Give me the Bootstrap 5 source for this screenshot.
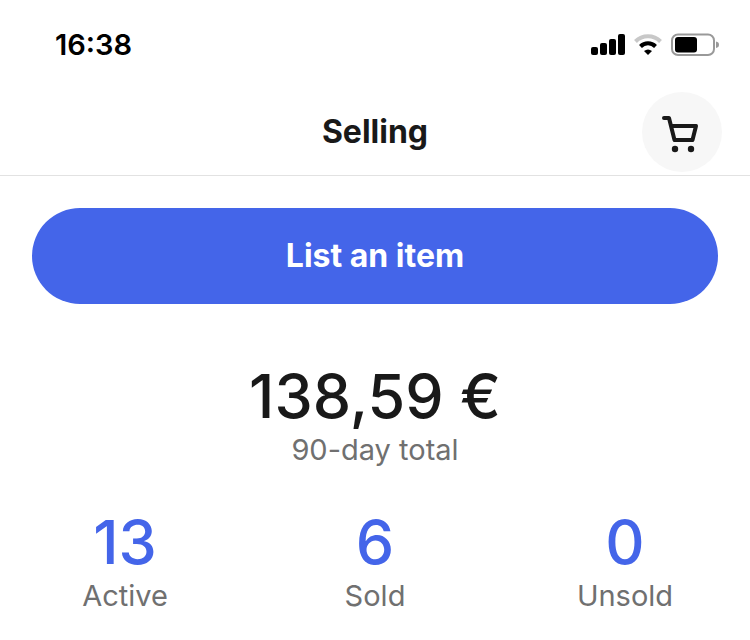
<!DOCTYPE html>
<html lang="en">
<head>
<meta charset="utf-8">
<meta name="viewport" content="width=device-width, initial-scale=1">
<title>Selling</title>
<link href="https://cdn.jsdelivr.net/npm/bootstrap@5.3.0/dist/css/bootstrap.min.css" rel="stylesheet">
<style>
  body { font-family: Inter, "Liberation Sans", sans-serif; color: #191919; background: #fff; }
  .status-bar { height: 88px; padding: 2px 30px 0 55px; }
  .clock { font-size: 29px; line-height: 40px; font-weight: 600; color: #000; }
  .app-header { height: 88px; padding: 0 28px; border-bottom: 1px solid #e2e2e2; display: grid; grid-template-columns: 80px 1fr 80px; }
  .app-title { grid-column: 2; font-size: 32px; line-height: 40px; font-weight: 700; }
  .cart-btn { width: 80px; height: 80px; background: #f7f7f7; }
  .listing-action { padding: 32px; }
  .list-btn { --bs-btn-color: #fff; --bs-btn-bg: #4465e9; --bs-btn-hover-color: #fff; --bs-btn-hover-bg: #3554d4; height: 96px; font-size: 32px; line-height: 40px; font-weight: 700; }
  .sales-total { padding-top: 24px; }
  .stats { padding-top: 38px; }
  .figure-value { font-size: 61px; line-height: 72px; font-weight: 500; }
  .figure-label { font-size: 29px; line-height: 36px; color: #707070; }
  .stat-link .figure-value { color: #4465e9; }
</style>
<script defer src="https://cdn.jsdelivr.net/npm/bootstrap@5.3.0/dist/js/bootstrap.bundle.min.js"></script>
</head>
<body>
<div class="status-bar d-flex align-items-center justify-content-between">
  <span class="clock">16:38</span>
  <svg width="130" height="26" viewBox="590 32 130 26" role="img" aria-label="Signal, Wi-Fi, battery">
    <rect x="591" y="47" width="7" height="8" rx="2"/>
    <rect x="600" y="43" width="7" height="12" rx="2"/>
    <rect x="609" y="39" width="7" height="16" rx="2"/>
    <rect x="618" y="34" width="7" height="21" rx="2"/>
    <g fill="none" stroke-width="4">
      <path d="M635.500 41.500A17.500 17.500 0 0 1 660.500 41.500" stroke="#c8c8c8"/>
      <path d="M640.500 46.500A10.500 10.500 0 0 1 655.500 46.500" stroke="#000"/>
    </g>
    <path d="M644 51Q648 48 652 51L648 55Z"/>
    <rect x="672" y="34.500" width="42" height="20.500" rx="6" fill="#fff" stroke="#999" stroke-width="2"/>
    <rect x="675" y="37" width="22" height="15.500" rx="3"/>
    <path d="M716 41.500Q719 42 719 44.700T716 48Z" fill="#999"/>
  </svg>
</div>
<header class="app-header align-items-center">
  <h1 class="app-title text-center m-0">Selling</h1>
  <button type="button" class="cart-btn btn rounded-circle border-0 p-0 d-flex align-items-center justify-content-center" aria-label="Shopping cart">
    <svg width="80" height="80" viewBox="0 0 80 80" fill="none" stroke="#191919" stroke-width="4" stroke-linecap="round" stroke-linejoin="round" aria-hidden="true">
      <path d="M22 26H27L32.500 48H50.500L54 34H29.500"/>
      <circle cx="33" cy="57" r="3.200" fill="#191919" stroke="none"/>
      <circle cx="49" cy="57" r="3.200" fill="#191919" stroke="none"/>
    </svg>
  </button>
</header>
<main>
  <div class="listing-action">
    <button type="button" class="list-btn btn rounded-pill border-0 w-100">List an item</button>
  </div>
  <section class="sales-total text-center">
    <div class="figure-value">138,59 €</div>
    <div class="figure-label">90-day total</div>
  </section>
  <nav class="stats row g-0 text-center" aria-label="Listings">
    <a href="#active" class="stat-link col text-decoration-none"><div class="figure-value">13</div><div class="figure-label">Active</div></a>
    <a href="#sold" class="stat-link col text-decoration-none"><div class="figure-value">6</div><div class="figure-label">Sold</div></a>
    <a href="#unsold" class="stat-link col text-decoration-none"><div class="figure-value">0</div><div class="figure-label">Unsold</div></a>
  </nav>
</main>
</body>
</html>
